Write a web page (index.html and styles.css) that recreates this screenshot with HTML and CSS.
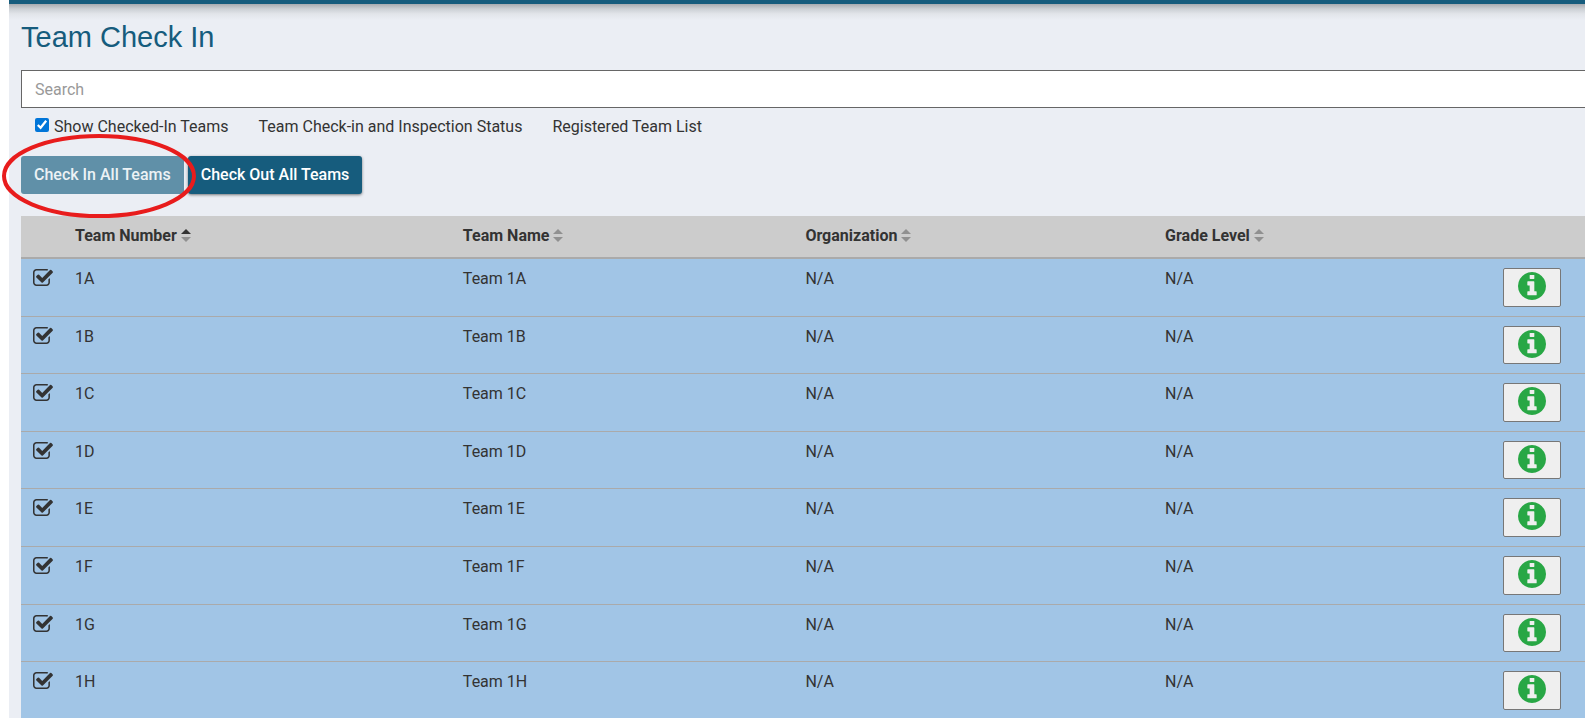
FILE: index.html
```html
<!DOCTYPE html>
<html lang="en">
<head>
<meta charset="UTF-8">
<title>Team Check In</title>
<link rel="stylesheet" href="styles.css">
</head>
<body>

<svg class="sprite" aria-hidden="true">
    <symbol id="check" viewBox="64 128 1664 1408">
        <path d="M1472 930v318q0 119-84.500 203.500t-203.500 84.500h-832q-119 0-203.500-84.500t-84.500-203.500v-832q0-119 84.500-203.500t203.500-84.500h832q63 0 117 25 15 7 18 23 3 17-9 29l-49 49q-10 10-23 10-3 0-9-2-23-6-45-6h-832q-66 0-113 47t-47 113v832q0 66 47 113t113 47h832q66 0 113-47t47-113v-254q0-13 9-22l64-64q10-10 23-10 6 0 12 3 20 8 20 29zm231-489l-814 814q-24 24-57 24t-57-24l-430-430q-24-24-24-57t24-57l110-110q24-24 57-24t57 24l263 263 647-647q24-24 57-24t57 24l110 110q24 24 24 57t-24 57z"/>
    </symbol>
    <symbol id="info" viewBox="128 128 1536 1536">
        <path d="M1152 1376v-160q0-14-9-23t-23-9h-96v-512q0-14-9-23t-23-9h-320q-14 0-23 9t-9 23v160q0 14 9 23t23 9h96v320h-96q-14 0-23 9t-9 23v160q0 14 9 23t23 9h448q14 0 23-9t9-23zm-128-896v-160q0-14-9-23t-23-9h-192q-14 0-23 9t-9 23v160q0 14 9 23t23 9h192q14 0 23-9t9-23zm640 416q0 209-103 385.500t-279.500 279.500-385.500 103-385.500-103-279.500-279.500-103-385.500 103-385.500 279.500-279.500 385.500-103 385.500 103 279.500 279.500 103 385.500z"/>
    </symbol>
    <symbol id="sort" viewBox="0 0 10 13">
        <path class="up" d="M5 0L10 5H0z"/>
        <path class="down" d="M0 8H10L5 13z"/>
    </symbol>
</svg>

<main class="page">
    <h1>Team Check In</h1>
    <input class="search" type="text" placeholder="Search" aria-label="Search">

    <div class="options">
        <label class="show"><input type="checkbox" checked> Show Checked-In Teams</label>
        <a href="#status">Team Check-in and Inspection Status</a>
        <a href="#list">Registered Team List</a>
    </div>

    <div class="actions">
        <div class="marked">
            <button class="btn" disabled>Check In All Teams</button>
            <svg class="ring" viewBox="0 0 196 86"><ellipse cx="98" cy="43" rx="95" ry="40"/></svg>
        </div>
        <button class="btn">Check Out All Teams</button>
    </div>

    <table class="teams">
        <thead>
            <tr>
                <th class="col-check"></th>
                <th class="col-number"><button class="sort asc">Team Number <svg><use href="#sort"/></svg></button></th>
                <th class="col-name"><button class="sort">Team Name <svg><use href="#sort"/></svg></button></th>
                <th class="col-org"><button class="sort">Organization <svg><use href="#sort"/></svg></button></th>
                <th class="col-grade"><button class="sort">Grade Level <svg><use href="#sort"/></svg></button></th>
                <th class="col-info"></th>
            </tr>
        </thead>
        <tbody>
            <tr><td><svg class="check"><use href="#check"/></svg></td><td>1A</td><td>Team 1A</td><td>N/A</td><td>N/A</td><td><button class="info" aria-label="Team 1A info"><svg><use href="#info"/></svg></button></td></tr>
            <tr><td><svg class="check"><use href="#check"/></svg></td><td>1B</td><td>Team 1B</td><td>N/A</td><td>N/A</td><td><button class="info" aria-label="Team 1B info"><svg><use href="#info"/></svg></button></td></tr>
            <tr><td><svg class="check"><use href="#check"/></svg></td><td>1C</td><td>Team 1C</td><td>N/A</td><td>N/A</td><td><button class="info" aria-label="Team 1C info"><svg><use href="#info"/></svg></button></td></tr>
            <tr><td><svg class="check"><use href="#check"/></svg></td><td>1D</td><td>Team 1D</td><td>N/A</td><td>N/A</td><td><button class="info" aria-label="Team 1D info"><svg><use href="#info"/></svg></button></td></tr>
            <tr><td><svg class="check"><use href="#check"/></svg></td><td>1E</td><td>Team 1E</td><td>N/A</td><td>N/A</td><td><button class="info" aria-label="Team 1E info"><svg><use href="#info"/></svg></button></td></tr>
            <tr><td><svg class="check"><use href="#check"/></svg></td><td>1F</td><td>Team 1F</td><td>N/A</td><td>N/A</td><td><button class="info" aria-label="Team 1F info"><svg><use href="#info"/></svg></button></td></tr>
            <tr><td><svg class="check"><use href="#check"/></svg></td><td>1G</td><td>Team 1G</td><td>N/A</td><td>N/A</td><td><button class="info" aria-label="Team 1G info"><svg><use href="#info"/></svg></button></td></tr>
            <tr><td><svg class="check"><use href="#check"/></svg></td><td>1H</td><td>Team 1H</td><td>N/A</td><td>N/A</td><td><button class="info" aria-label="Team 1H info"><svg><use href="#info"/></svg></button></td></tr>
        </tbody>
    </table>
</main>

</body>
</html>
```
FILE: styles.css
```css
* { box-sizing: border-box; }
html { background: #fff; overflow: hidden; }
body { margin: 0; padding-left: 9px; font: 16px/22px Roboto, sans-serif; color: #333; }
button, input { font: inherit; }
.sprite { display: none; }

.page { min-height: 100vh; padding: 16px 0 0 12px; border-top: 4px solid #165c7d; background: linear-gradient(#a8abb0, #ccd0d5 5px, #e2e5ea 10px, #ebeef4 16px) no-repeat #ebeef4; }
h1 { margin: 0 0 16px; font: 29px/34px "Liberation Sans", Arial, sans-serif; color: #165c7d; }

.search { display: block; width: 100%; height: 38px; padding: 0 13px; border: 1px solid #666; border-right: 0; border-radius: 0; background: #fff; }
.search::placeholder { color: #999; }

.options { display: flex; gap: 30px; padding: 8px 14px 0; }
.options a { color: inherit; text-decoration: none; }
.show { display: flex; gap: 5px; }
.show input { width: 14px; height: 14px; margin: 2px 0 0; accent-color: #0075d8; }

.actions { display: flex; gap: 4px; margin: 18px 0 22px; }
.marked { position: relative; }
.btn { height: 38px; padding: 0 13px; border: 0; border-radius: 3px; background: #165c7d; color: #fff; font-weight: 500; box-shadow: 0 1px 3px rgba(0,0,0,.5); }
.btn:disabled { background: #6090a8; color: #ecf2f5; box-shadow: none; }
.ring { position: absolute; left: -20px; top: -23px; width: 196px; height: 86px; fill: none; stroke: #e81c1c; stroke-width: 4; pointer-events: none; }

.teams { width: 100%; table-layout: fixed; border-collapse: separate; border-spacing: 0; }
.teams th { height: 43px; padding: 0 8px 2px; background: #ccc; border-bottom: 2px solid #aaa; text-align: left; }
.teams td { padding: 9px 8px; background: #a1c5e6; border-bottom: 1px solid #aaa; vertical-align: top; }
.col-check { width: 46px; }
.col-number { width: 24.8%; }
.col-name { width: 21.9%; }
.col-org { width: 23%; }
.col-grade { width: 21.6%; }

.sort { display: flex; align-items: center; gap: 4px; padding: 0; border: 0; background: none; color: #333; font-weight: 700; }
.sort svg { width: 10px; height: 13px; fill: #909090; }
.asc { --up: #333; }
.up { fill: var(--up, #909090); }

.check { display: block; width: 20px; height: 17px; margin: 1px 4px; fill: #333; }
.info { display: block; width: 58px; padding: 3px 0 4px; border: 1px solid #777; border-radius: 2px; background: #efefef; line-height: 1.85; }
.info svg { width: 28px; height: 28px; fill: #28a745; vertical-align: top; }
```
